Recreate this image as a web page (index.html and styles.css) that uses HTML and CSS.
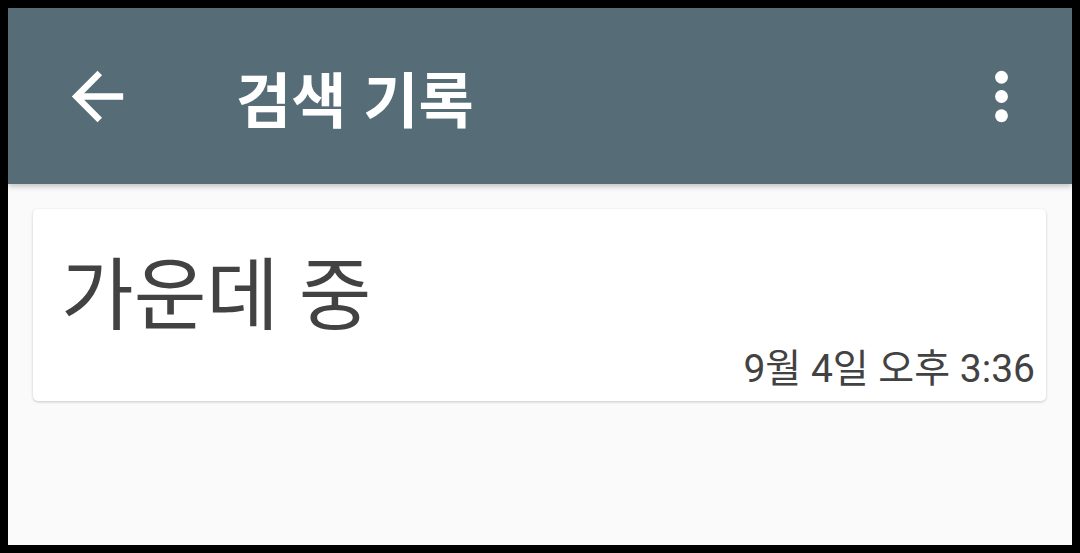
FILE: index.html
```html
<!DOCTYPE html>
<html lang="ko">
<head>
    <meta charset="UTF-8">
    <title>검색 기록</title>
    <link rel="stylesheet" href="styles.css">
</head>
<body>
    <div class="screen">
        <header class="toolbar">
            <button class="icon-btn back" type="button" aria-label="뒤로">
                <svg viewBox="0 0 24 24" width="77" height="77">
                    <path d="M20 11H7.83l5.59-5.59L12 4l-8 8 8 8 1.41-1.41L7.83 13H20v-2z" fill="#fff"/>
                </svg>
            </button>
            <h1 class="title">검색 기록</h1>
            <button class="icon-btn more" type="button" aria-label="더보기">
                <svg viewBox="0 0 24 24" width="77" height="77">
                    <circle cx="12" cy="6" r="2" fill="#fff"/>
                    <circle cx="12" cy="12" r="2" fill="#fff"/>
                    <circle cx="12" cy="18" r="2" fill="#fff"/>
                </svg>
            </button>
        </header>
        <main class="list">
            <div class="card">
                <div class="query">가운데 중</div>
                <div class="time">9월 4일 오후 3:36</div>
            </div>
        </main>
    </div>
</body>
</html>
```

FILE: styles.css
```css
/* 검색 기록 화면 */
html, body {
    margin: 0;
    background: #000;
}
.screen {
    margin: 8px;
    height: 537px;
    background: #fafafa;
    font-family: Roboto, "Noto Sans CJK KR", sans-serif;
    overflow: hidden;
}
.toolbar {
    height: 176px;
    background: #566d78;
    display: flex;
    align-items: center;
    box-shadow: 0 2px 6px rgba(0, 0, 0, 0.25);
    position: relative;
}
.icon-btn {
    background: none;
    border: none;
    padding: 0;
    width: 77px;
    height: 77px;
    display: flex;
}
.back {
    margin-left: 51px;
}
.title {
    margin: 0 0 0 100px;
    flex: 1;
    color: #fff;
    font-size: 60px;
    font-weight: bold;
    font-family: "Noto Sans CJK KR", sans-serif;
}
.more {
    margin-right: 32px;
}
.list {
    padding: 25px 26px 0 25px;
}
.card {
    background: #fff;
    border-radius: 5px;
    box-shadow: 0 1px 3px rgba(0, 0, 0, 0.2);
    height: 192px;
    padding: 0 11px 0 28px;
    box-sizing: border-box;
    display: flex;
    flex-direction: column;
}
.query {
    color: #424242;
    font-size: 79px;
    margin-top: 38px;
    line-height: 100px;
}
.time {
    color: #424242;
    font-size: 39px;
    text-align: right;
    line-height: 50px;
    margin-top: -3px;
}
```
